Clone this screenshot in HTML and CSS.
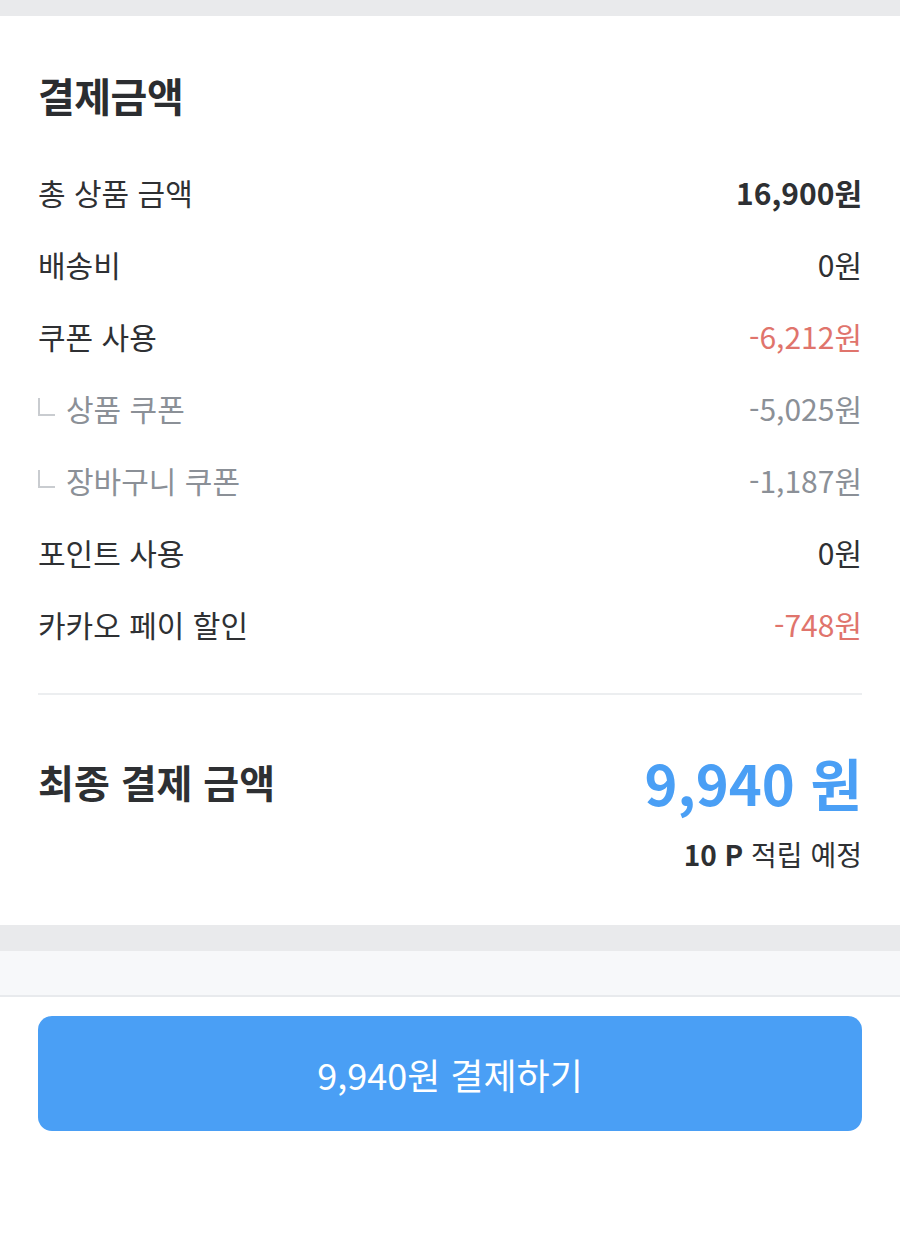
FILE: index.html
```html
<!DOCTYPE html>
<html lang="ko">
	<head>
		<meta charset="utf-8">
		<title>결제금액</title>
		<meta name="viewport" content="width=device-width, initial-scale=1, user-scalable=no">
		<link rel="stylesheet" href="styles.css">
	</head>
	<body>
		<div class="band top"></div>
		<section class="summary">
			<h2>결제금액</h2>
			<div class="rows">
				<div class="row">
					<span>총 상품 금액</span>
					<span class="strong">16,900원</span>
				</div>
				<div class="row">
					<span>배송비</span>
					<span>0원</span>
				</div>
				<div class="row">
					<span>쿠폰 사용</span>
					<span class="minus">-6,212원</span>
				</div>
				<div class="row sub">
					<span><i class="branch"></i>상품 쿠폰</span>
					<span>-5,025원</span>
				</div>
				<div class="row sub">
					<span><i class="branch"></i>장바구니 쿠폰</span>
					<span>-1,187원</span>
				</div>
				<div class="row">
					<span>포인트 사용</span>
					<span>0원</span>
				</div>
				<div class="row">
					<span>카카오 페이 할인</span>
					<span class="minus">-748원</span>
				</div>
			</div>
			<hr class="divider">
			<div class="total">
				<span class="total-label">최종 결제 금액</span>
				<span class="total-value">9,940 원</span>
			</div>
			<div class="points"><b>10 P</b> 적립 예정</div>
		</section>
		<div class="band mid"></div>
		<div class="spacer"></div>
		<div class="footer">
			<button class="pay">9,940원 결제하기</button>
		</div>
	</body>
</html>
```

FILE: styles.css
```css
body {
	margin: 0;
	font-family: "Noto Sans CJK KR", "Noto Sans", sans-serif;
	color: #2e3033;
	background-color: #fff;
}

.band {
	background-color: #e9eaec;
}

.band.top {
	height: 16px;
}

.band.mid {
	height: 26px;
}

.summary {
	padding: 54px 38px 53px 38px;
}

h2 {
	margin: 0;
	font-size: 40px;
	line-height: 50px;
	font-weight: 700;
	letter-spacing: -0.5px;
	color: #2b2d30;
}

.rows {
	margin-top: 36px;
}

.row {
	display: flex;
	justify-content: space-between;
	align-items: center;
	height: 72px;
	font-size: 30px;
}

.row .strong {
	font-weight: 700;
}

.row .minus {
	color: #e0746c;
}

.row.sub {
	color: #8b9097;
}

.row.sub > span:first-child {
	display: flex;
	align-items: center;
}

.branch {
	display: inline-block;
	width: 15px;
	height: 16px;
	border-left: 2px solid #c9ccd0;
	border-bottom: 2px solid #c9ccd0;
	margin: 0 11px 2px 0;
}

.divider {
	border: none;
	height: 2px;
	background-color: #eceef0;
	margin: 33px 0 0 0;
}

.total {
	display: flex;
	justify-content: space-between;
	align-items: center;
	height: 70px;
	margin-top: 51px;
}

.total-label {
	font-size: 39px;
	font-weight: 700;
}

.total-value {
	font-size: 56px;
	font-weight: 700;
	color: #4a9ff5;
}

.points {
	margin-top: 20px;
	text-align: right;
	font-size: 28px;
	line-height: 36px;
}

.points b {
	font-weight: 700;
}

.spacer {
	height: 44px;
	background-color: #f7f8fa;
	border-bottom: 2px solid #e8eaed;
}

.footer {
	padding: 19px 38px 100px 38px;
}

.pay {
	display: block;
	width: 100%;
	height: 115px;
	border: none;
	border-radius: 14px;
	background-color: #4a9ff5;
	color: #fff;
	font-family: inherit;
	font-size: 36px;
	cursor: pointer;
}
```
